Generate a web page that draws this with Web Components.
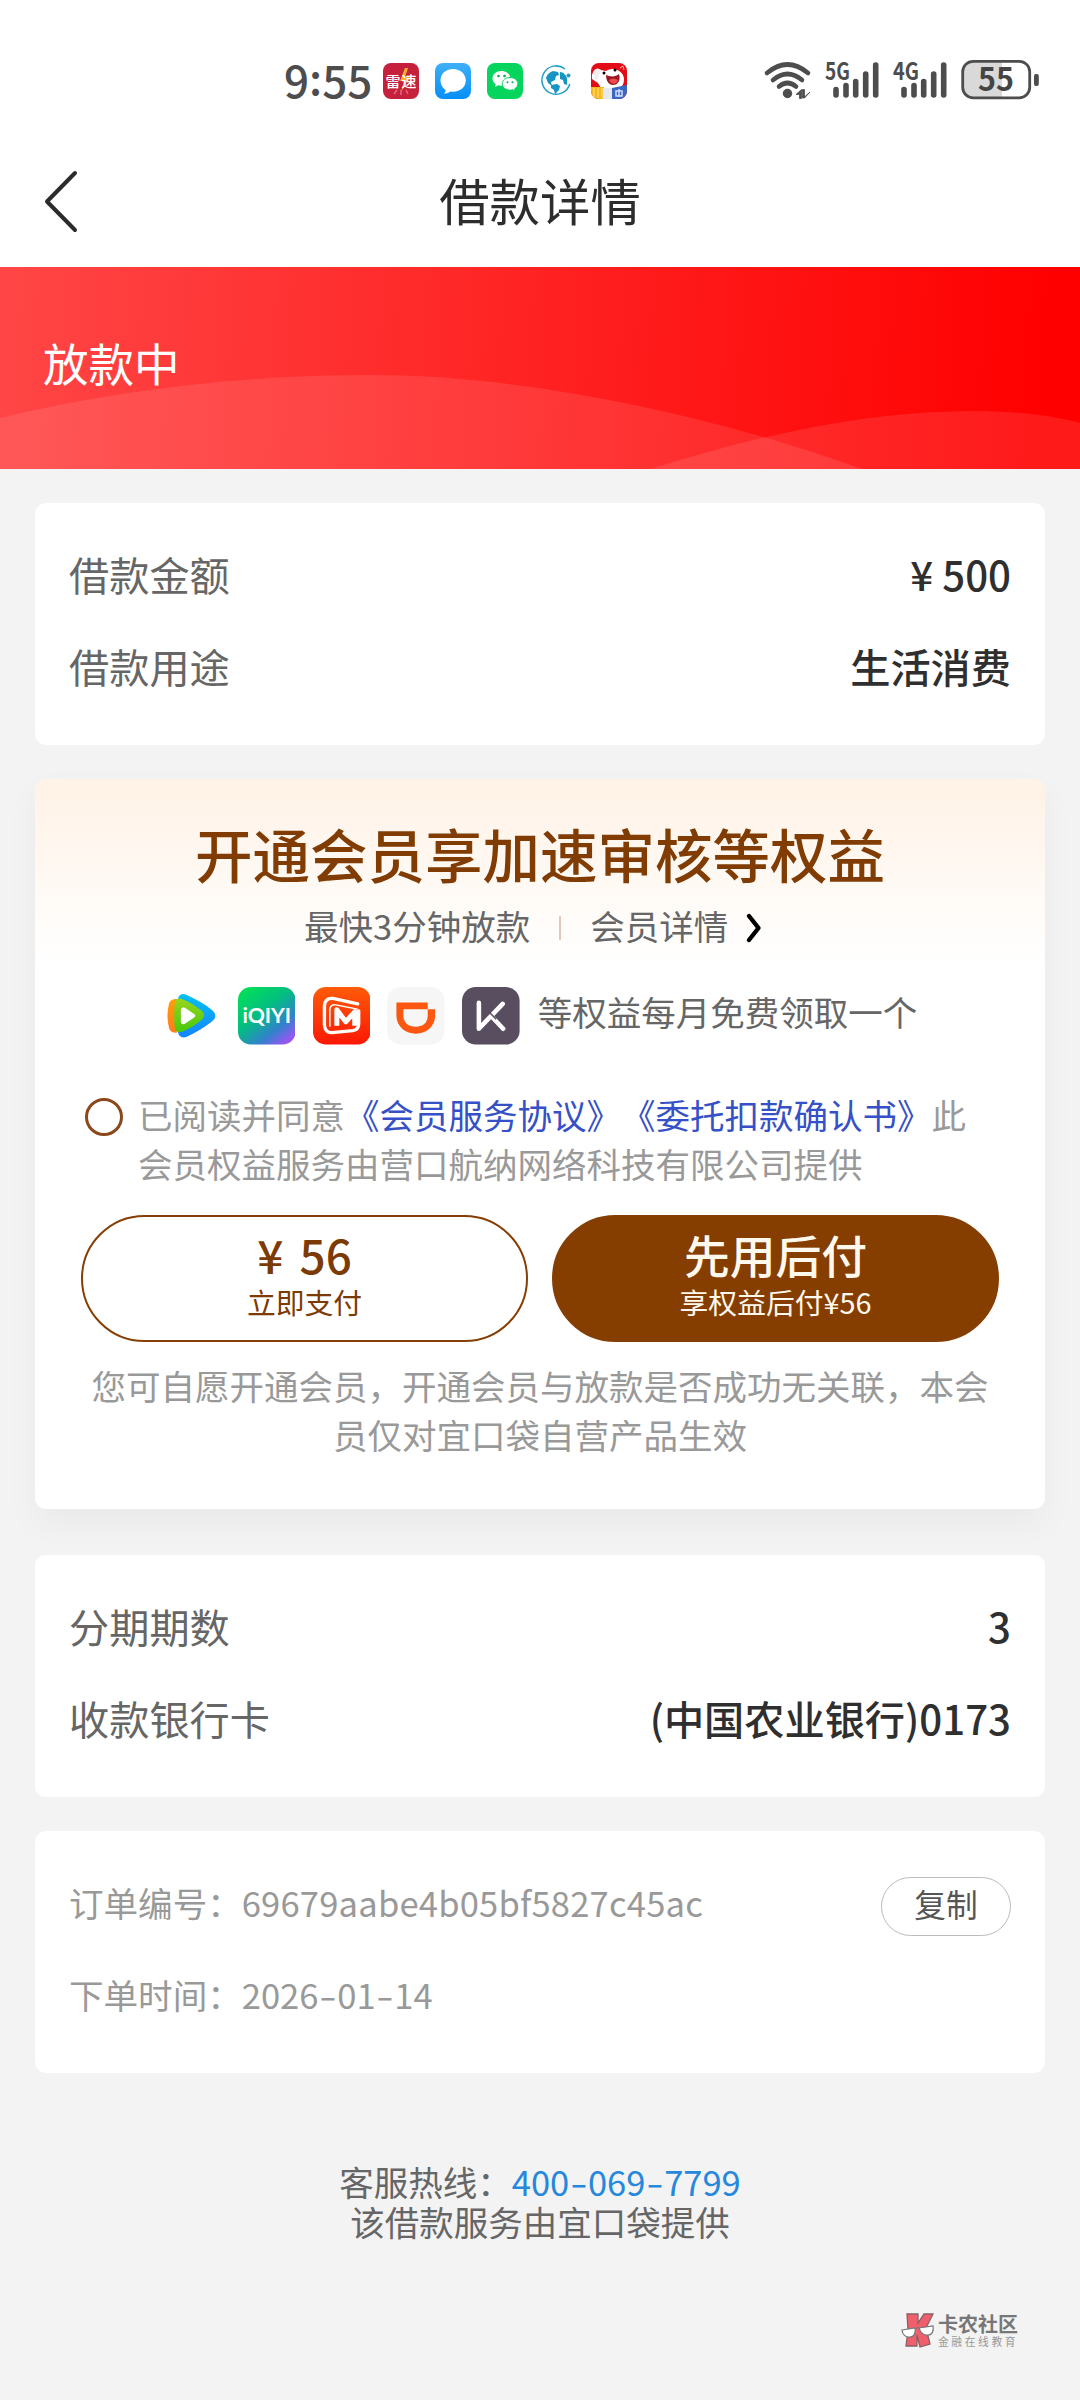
<!DOCTYPE html>
<html lang="zh-CN">
<head>
<meta charset="utf-8">
<title>借款详情</title>
<style>
html,body{margin:0;padding:0}
body{width:1080px;min-height:2400px;background:#f3f3f3;font-family:"Noto Sans CJK SC","Noto Sans",sans-serif;color:#666;text-spacing-trim:space-all;overflow-x:hidden}
</style>
</head>
<body>
<loan-page></loan-page>
<script>
const define = (name, html) => {
  const tpl = document.createElement('template');
  tpl.innerHTML = html;
  customElements.define(name, class extends HTMLElement {
    constructor() {
      super();
      this.attachShadow({ mode: 'open' }).append(tpl.content.cloneNode(true));
    }
  });
};

define('status-bar', `
<style>
:host{display:flex;justify-content:space-between;height:134px;box-sizing:border-box;padding:60px 40px 0 284px;background:#fff;color:#4d4d4d}
.left,.right{display:flex;align-items:flex-start}
.time{font-size:44px;line-height:40px;font-weight:500;width:99px;white-space:nowrap;margin-top:-1px}
.apps{display:flex;gap:16px;padding-top:3px}
svg{display:block;overflow:visible;font-family:"Noto Sans CJK SC",sans-serif}
</style>
<div class="left">
  <div class="time">9<span style="position:relative;top:-3px">:</span>55</div>
  <div class="apps">
    <svg width="36" height="36" viewBox="0 0 36 36"><rect width="36" height="36" rx="8" fill="#c5203c"/><path d="M22 5l-5 13h4l-3 11 9-15h-5l3-9z" fill="#ffb02e"/><text x="2.5" y="23.5" font-size="15" font-weight="500" fill="#fff" textLength="31">雷速</text><path d="M11 31l3-4M18 32v-5M25 31l-2-4" stroke="#e2687a" stroke-width="1.5"/></svg>
    <svg width="36" height="36" viewBox="0 0 36 36"><defs><linearGradient id="m" x2="0" y2="1"><stop stop-color="#3fb0f7"/><stop offset="1" stop-color="#058ff7"/></linearGradient></defs><rect width="36" height="36" rx="8" fill="url(#m)"/><path d="M18 6C10.500 6 5.500 11 5.500 17.500c0 4 2 7.500 5 9.500.300 1.500-.500 2.800-1.800 3.600 3 0 5-.800 6.500-2.200 9 1.500 15.600-4 15.600-11C30.800 11 25.500 6 18 6z" fill="#fff"/></svg>
    <svg width="36" height="36" viewBox="0 0 36 36"><rect width="36" height="36" rx="8" fill="#05d45d"/><path d="M14.500 8C9 8 5.500 11.500 5.500 15.500c0 2.400 1.200 4.400 3.200 5.700L8 24l3.300-1.700c1 .3 2.100.4 3.200.4C20 22.700 23.500 19.500 23.500 15.500S20 8 14.500 8z" fill="#fff"/><path d="M23 14.500c-4.500 0-7.800 2.700-7.800 6.300 0 3.700 3.400 6.300 7.800 6.300 1 0 1.900-.1 2.700-.4l2.600 1.400-.6-2.300c2-1.200 3.200-3 3.200-5 0-3.600-3.400-6.300-7.900-6.300z" fill="#fff" stroke="#05d45d" stroke-width="1"/><g fill="#0aac50"><circle cx="11.500" cy="13" r="1.300"/><circle cx="17.500" cy="13" r="1.300"/><circle cx="20.500" cy="19.300" r="1"/><circle cx="25.500" cy="19.300" r="1"/></g></svg>
    <svg width="36" height="36" viewBox="0 0 36 36"><path d="M26 6A14.200 14.200 0 1 0 30.800 21" fill="none" stroke="#239fc7" stroke-width="1.500"/><circle cx="29.500" cy="12.500" r="2" fill="#239fc7"/><path d="M7 15c1-4 4-6 7-7l5 1 1 3-3 1-1 4-4 2 1 4-4-3zM21 9c3 0 6 3 7 6v7l-3-1-1-4-3-1zM12 22l6-1 3 2-1 4-4 4-1-4-3-2z" fill="#1795c2"/></svg>
    <svg width="36" height="36" viewBox="0 0 36 36"><defs><clipPath id="j"><rect width="36" height="36" rx="8"/></clipPath></defs><g clip-path="url(#j)"><rect width="36" height="36" fill="#e20b16"/><path d="M1 16C0 8 6 4 10 7l5 1c5-4 14-2 17 4 3 7-1 13-6 15H11L7 20z" fill="#fff"/><path d="M2 10c2-6 7-5 8-2L5 19z" fill="#eee"/><path d="M15 12c4 2 10 2 13-1 2 6-1 11-6 11-4 0-7-4-7-10z" fill="#9c1820"/><path d="M18 17c3-2 6-2 9 0-1 4-6 6-9 0z" fill="#f04a50"/><circle cx="13" cy="10" r="1.500"/><circle cx="24" cy="7" r="1.500"/><path d="M29 5l3-2 1 4" stroke="#ffb7a2" fill="none"/><rect y="24" width="13" height="12" fill="#f5b91d"/><path d="M3 25v10M7 25v10M11 25v10" stroke="#ffe18b"/><path d="M12 25h10v11H12z" fill="#e6e7ef"/><path d="M21 25l15-3v14H21z" fill="#3767c3"/><path d="M25 28h6v5h-6zM28 26v8" fill="none" stroke="#d3dcff" stroke-width="1.500"/></g></svg>
  </div>
</div>
<div class="right">
<svg width="278" height="42" viewBox="762 60 278 42">
  <g fill="none" stroke="#4d4d4d" stroke-width="4.600" stroke-linecap="round"><path d="M767 73Q787.500 56 808 73"/><path d="M773 80Q787.500 68 802 80"/><path d="M779 86.500Q787.500 79.500 796 86.500"/></g>
  <circle cx="787.500" cy="93.500" r="4.700" fill="#4d4d4d"/><path d="M796 94.500l5.500-5v9h-2v-4zM810 92l-5.500 5v-7.500h-2v8.500h2z" fill="#4d4d4d" stroke="#4d4d4d" stroke-width=".8"/>
  <g fill="#4d4d4d" font-weight="700" font-size="24"><text x="825" y="79.500" textLength="25" lengthAdjust="spacingAndGlyphs">5G</text><text x="893" y="79.500" textLength="26" lengthAdjust="spacingAndGlyphs">4G</text></g>
  <g stroke="#4d4d4d" stroke-width="5.600" stroke-linecap="round"><path d="M836 89.500v5.500M846 85.500v9.500M855.700 81.500v13.500M865.700 74v21M875.700 65v30M904 89.500v5.500M914 85.500v9.500M923.700 81.500v13.500M933.700 74v21M943.700 65v30"/></g>
  <path d="M1002 62H972a9 9 0 0 0-9 9v17a9 9 0 0 0 9 9h30z" fill="#d9d9d9"/>
  <rect x="962.700" y="61.300" width="67" height="36.500" rx="10.500" fill="none" stroke="#4d4d4d" stroke-width="2.800"/>
  <rect x="1034" y="74" width="4.800" height="12" rx="2" fill="#4d4d4d"/>
  <text x="978" y="91" font-size="32" font-weight="700" fill="#444" textLength="36" lengthAdjust="spacingAndGlyphs">55</text>
</svg>
</div>`);

define('nav-bar', `
<style>
:host{display:grid;grid-template-columns:120px 1fr 120px;height:133px;background:#fff;color:#2d2d2d}
svg{display:block;margin:34px 0 0 42px}
h1{margin:0;text-align:center;font-size:50.400px;font-weight:400;line-height:131px}
</style>
<svg width="40" height="66" viewBox="0 0 40 66"><path d="M33 5L5 33.500L33 62" fill="none" stroke="#2b2b2b" stroke-width="4" stroke-linecap="round" stroke-linejoin="round"/></svg>
<h1><slot></slot></h1>`);

define('loan-banner', `
<style>
:host{display:grid;height:202px;color:#fff}
svg,div{grid-area:1/1;display:block}
div{font-size:45.500px;line-height:191px;padding-left:43px}
</style>
<svg width="1080" height="202" viewBox="0 0 1080 202">
<defs><linearGradient id="g" gradientUnits="userSpaceOnUse" x1="0" y1="0" x2="1050" y2="60"><stop stop-color="#ff4646"/><stop offset="1" stop-color="#f00"/></linearGradient></defs>
<rect width="1080" height="202" fill="url(#g)"/>
<path d="M0 151C120 122 250 108 370 108C530 108 715 149 862 202H0Z" fill="#fff" fill-opacity=".1"/>
<path d="M651 202C765 166 870 144 975 144C1015 144 1050 148 1080 156V202Z" fill="#fff" fill-opacity=".1"/>
</svg>
<div><slot></slot></div>`);

define('info-card', `
<style>
:host{display:block;margin:0 35px;height:242px;box-sizing:border-box;padding:25px 34px 32px 34px;background:#fff;border-radius:11px}
</style><slot></slot>`);

define('info-row', `
<style>
:host{display:flex;justify-content:space-between;height:92px;line-height:92px;font-size:40.200px;color:#666;white-space:nowrap}
.v{font-weight:500;color:#2f2f2f}
</style><span><slot name="label"></slot></span><span class="v"><slot></slot></span>`);

define('order-row', `
<style>
:host{display:flex;justify-content:space-between;align-items:center;height:92px;line-height:92px;font-size:34.560px;color:#999;white-space:nowrap}
</style><span><slot></slot></span><slot name="action"></slot>`);

define('wide-dash', `
<style>
:host{display:inline-block;transform:scaleX(1.45);margin:0 3.400px}
</style><slot></slot>`);

define('copy-button', `
<style>
:host{display:block;box-sizing:border-box;width:130px;height:59px;border:1.500px solid #bbb;border-radius:30px;text-align:center;font-size:31.700px;line-height:50px;color:#555;margin-top:8px}
</style><slot></slot>`);

define('benefit-icons', `
<style>
:host{display:flex;gap:17.200px;align-items:center}
svg{display:block;width:57.600px;height:57.600px}
</style>
<svg viewBox="0 0 58 58"><defs><linearGradient id="b" x2="0" y2="1"><stop stop-color="#05c1f0"/><stop offset="1" stop-color="#1583ff"/></linearGradient><linearGradient id="o" x2="0" y2="1"><stop stop-color="#ff9d08"/><stop offset="1" stop-color="#ff7b20"/></linearGradient><linearGradient id="gr" x2="0" y2="1"><stop stop-color="#9bd41c"/><stop offset="1" stop-color="#46c90c"/></linearGradient></defs><g transform="translate(1 0)"><path d="M14 12c1-5 5-6 9-4 9 4 18 9 25 15 5 4 5 8 0 12-8 6-16 11-25 15-5 2-8 0-9-5-2-11-2-22 0-33z" fill="url(#b)"/><path d="M5 17c1-4 4-5 8-5v34c-4 0-7-1-8-5-2-8-2-16 0-24z" fill="url(#o)"/><path d="M11 15c1-3 4-4 7-3 8 3 14 7 20 12 3 3 3 6 0 9-6 5-12 9-20 12-3 1-6 0-7-3-1-9-1-18 0-27z" fill="url(#gr)"/><path d="M17 23c0-2 2-3 4-2l9 6c2 1 2 3 0 4l-9 6c-2 1-4 0-4-2z" fill="#fff"/></g></svg>
<svg viewBox="0 0 58 58"><defs><linearGradient id="q" x1=".15" x2=".95" y2="1"><stop stop-color="#03df57"/><stop offset=".4" stop-color="#03bd82"/><stop offset=".7" stop-color="#3182cc"/><stop offset="1" stop-color="#bd45ff"/></linearGradient></defs><rect width="58" height="58" rx="13" fill="url(#q)"/><text x="4.500" y="36.500" font-family="Lato,sans-serif" font-size="21" font-weight="700" fill="#fff" textLength="49" lengthAdjust="spacingAndGlyphs">iQIYI</text></svg>
<svg viewBox="0 0 58 58"><defs><linearGradient id="mg" x2="0" y2="1"><stop stop-color="#ff5b08"/><stop offset="1" stop-color="#fb1805"/></linearGradient></defs><rect width="58" height="58" rx="13" fill="url(#mg)"/><path d="M45 17L20 11.500Q12 11 11.500 19V38Q12 46 19 46L40 44Q46 43 46 37V24" fill="none" stroke="#fff" stroke-width="3.400" stroke-linecap="round" stroke-linejoin="round"/><path d="M17 40V22Q18 17 23 18L45 22.500" fill="none" stroke="#fff" stroke-width="1.500"/><path d="M24 39V23L33 35L42 25V39" fill="none" stroke="#fff" stroke-width="5" stroke-linejoin="round"/></svg>
<svg viewBox="0 0 58 58"><rect width="58" height="58" rx="14" fill="#f6f6f6"/><path d="M9.500 15.500H41V22.500H48.500V29C48.500 40 39 47 29 47S9.500 40 9.500 29ZM16.500 22.500V29C16.500 36 22 40 29 40S41 36 41 29V22.500Z" fill="#fb5710" fill-rule="evenodd"/></svg>
<svg viewBox="0 0 58 58"><rect width="58" height="58" rx="14" fill="#594d60"/><path d="M17 16V42L41 17M31 31L41.500 42" fill="none" stroke="#fff" stroke-width="4.600" stroke-linecap="round" stroke-linejoin="round"/><path d="M27.500 25.500L34.500 32.500" stroke="#594d60" stroke-width="1.500"/></svg>`);

define('pay-button', `
<style>
:host{display:flex;flex-direction:column;align-items:center;box-sizing:border-box;width:447px;height:127px;padding-top:10px;border:2px solid #853e03;border-radius:64px;color:#7c3a04;background:#fff;white-space:nowrap}
:host([solid]){background:#853d00;color:#fff8ed}
:host(:not([solid])) b{word-spacing:6px}
b{font-size:45.800px;line-height:54px;font-weight:500}
span{font-size:28.800px;line-height:41px}
</style><b><slot></slot></b><span><slot name="sub"></slot></span>`);

define('member-card', `
<style>
:host{display:flex;flex-direction:column;margin:0 35px;height:730px;box-sizing:border-box;padding-top:38px;border-radius:11px;background:linear-gradient(#fff2e6,#fff 185px);box-shadow:0 14px 34px rgba(0,0,0,.045);font-size:34.500px;white-space:nowrap}
h2{margin:0;text-align:center;font-size:57.500px;line-height:72px;font-weight:500;color:#803c03}
.sub{display:flex;align-items:center;height:44px;line-height:44px;margin-top:14px;padding-left:269px}
.sub i{width:2px;height:24px;background:#dfcabb;margin:5px 29px 0 29px}
.sub svg{display:block;margin:6px 0 0 14px}
.benefits{display:flex;align-items:center;margin-top:40px;height:58px;padding-left:128px;gap:18px}
.benefits span{line-height:46px;padding-bottom:11px}
.agree{display:flex;margin-top:45px;padding-left:50px;line-height:49px;color:#999}
.agree i{box-sizing:border-box;width:38px;height:38px;border:3.500px solid #8a481b;border-radius:50%;margin:8px 15px 0 0}
.agree em{font-style:normal;color:#3650c8}
.btns{display:flex;gap:24px;margin:27px 0 0 46px}
.note{margin-top:19px;line-height:49px;text-align:center;color:#999}
</style>
<h2>开通会员享加速审核等权益</h2>
<div class="sub"><span>最快3分钟放款</span><i></i><span>会员详情</span><svg width="24" height="34" viewBox="0 0 24 34"><path d="M7 5L16.500 17L7 29" fill="none" stroke="#000" stroke-width="4.400" stroke-linecap="round" stroke-linejoin="round"/></svg></div>
<div class="benefits"><benefit-icons></benefit-icons><span>等权益每月免费领取一个</span></div>
<div class="agree"><i></i><div>已阅读并同意<em>《会员服务协议》《委托扣款确认书》</em>此<br>会员权益服务由营口航纳网络科技有限公司提供</div></div>
<div class="btns"><pay-button>¥ 56<span slot="sub">立即支付</span></pay-button><pay-button solid>先用后付<span slot="sub">享权益后付¥56</span></pay-button></div>
<div class="note">您可自愿开通会员，开通会员与放款是否成功无关联，本会<br>员仅对宜口袋自营产品生效</div>`);

define('service-footer', `
<style>
:host{display:block;padding-top:88px;text-align:center;font-size:34.500px;line-height:40px;color:#666}
em{font-style:normal;color:#2588dc}
</style>
<div>客服热线：<em>400<wide-dash>-</wide-dash>069<wide-dash>-</wide-dash>7799</em></div><div>该借款服务由宜口袋提供</div>`);

define('brand-mark', `
<style>
:host{display:flex;justify-content:flex-end;align-items:flex-start;gap:2px;padding:71px 62px 0 0;white-space:nowrap}
svg{display:block}
.t{width:80px}
b{display:block;font-size:20px;line-height:23px;color:#777}
span{display:block;font-size:10.800px;line-height:12px;letter-spacing:2.550px;color:#999}
</style>
<svg width="36" height="37" viewBox="0 0 36 37"><path d="M7 2h11v9l6-9h9l-7 14 4 16-10 3-3-12v11H6l2-16z" fill="#ef5f6c" stroke="#8a6064" stroke-width="1.300"/><path d="M2 18l13-2c1 5-1 9-5 9-4 1-8-3-8-7zM19 16l14-2c1 5-1 9-5 9-4 1-8-3-9-7z" fill="#fff" stroke="#777" stroke-width="1.200"/><path d="M15 17q2-2 4-1" stroke="#777" fill="none"/></svg>
<div class="t"><b>卡农社区</b><span>金融在线教育</span></div>`);

define('loan-page', `
<style>
:host{display:flex;flex-direction:column;width:1080px;height:2400px;overflow:hidden;background:#f3f3f3}
info-card.a{margin-top:34px}
member-card{margin-top:34px}
info-card.b{margin-top:46px}
info-card.c{margin-top:34px}
.no{letter-spacing:.2px}
</style>
<status-bar></status-bar>
<nav-bar>借款详情</nav-bar>
<loan-banner>放款中</loan-banner>
<info-card class="a"><info-row><span slot="label">借款金额</span>¥ 500</info-row><info-row><span slot="label">借款用途</span>生活消费</info-row></info-card>
<member-card></member-card>
<info-card class="b"><info-row><span slot="label">分期期数</span>3</info-row><info-row><span slot="label">收款银行卡</span>(中国农业银行)0173</info-row></info-card>
<info-card class="c"><order-row>订单编号：<span class="no">69679aabe4b05bf5827c45ac</span><copy-button slot="action">复制</copy-button></order-row><order-row>下单时间：2026<wide-dash>-</wide-dash>01<wide-dash>-</wide-dash>14</order-row></info-card>
<service-footer></service-footer>
<brand-mark></brand-mark>`);
</script>
</body>
</html>
